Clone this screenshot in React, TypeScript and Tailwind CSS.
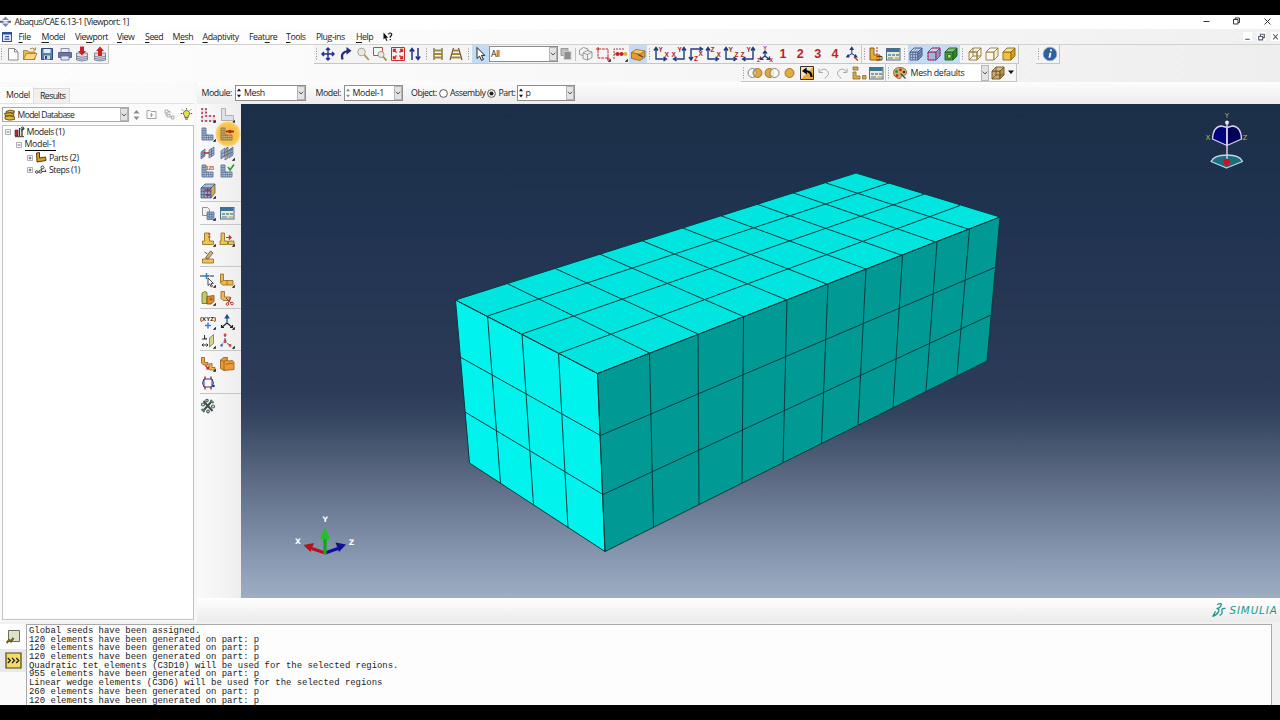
import React from "react";

type Kids = { children?: React.ReactNode };
type Pt = [number, number];

const Ic = ({ children }: Kids) => (
  <svg width="16" height="16" viewBox="0 0 16 16" fill="none" className="shrink-0">
    {children}
  </svg>
);

/* ---------- small pieces ---------- */

const Grip = () => (
  <svg width="3" height="12" viewBox="0 0 3 12" className="shrink-0">
    <path d="M1.5 .5V12" stroke="#8d8d8d" strokeWidth="1" strokeDasharray="1 1.5" />
  </svg>
);

const Cell = ({ children, on = false }: Kids & { on?: boolean }) => (
  <div className={`flex h-[18px] w-[17.4px] shrink-0 items-center justify-center ${on ? "bg-[#c3dcf3]" : ""}`}>{children}</div>
);

const Chevron = () => (
  <div className="flex h-full w-[8px] shrink-0 items-center justify-center border border-[#b5b5b5] bg-[#e3e3e3]">
    <svg width="6" height="4" viewBox="0 0 6 4" fill="none">
      <path d="M.8 .7L3 3L5.2 .7" stroke="#444" strokeWidth=".9" />
    </svg>
  </div>
);

const Spin = ({ dim = false }: { dim?: boolean }) => (
  <svg width="6" height="12" viewBox="0 0 6 12" className="shrink-0" fill={dim ? "#8a8a8a" : "#111"}>
    <path d="M3 1.6L5 4.2H1zM3 10.4L5 7.8H1z" />
  </svg>
);

/* ---------- drawing helpers ---------- */

const Arrow4 = () => (
  <path d="M8 2v12M2 8h12M6 4l2-2 2 2M6 12l2 2 2-2M4 6L2 8l2 2M12 6l2 2-2 2" stroke="#1f2f86" strokeWidth="1.4" />
);

const Cube = ({ front, top, side, line, wire = false }: { front: string; top: string; side: string; line: string; wire?: boolean }) => (
  <g stroke={line} strokeWidth=".9" strokeLinejoin="round">
    <path d="M2 6h8v8H2z" fill={front} />
    <path d="M2 6l4-4h8l-4 4z" fill={top} />
    <path d="M10 6l4-4v8l-4 4z" fill={side} />
    {wire && <path d="M6 2v8h8M6 10l-4 4" />}
  </g>
);

const MeshL = ({ line = "#4a5f86", fill = "#b9cbe4" }: { line?: string; fill?: string }) => (
  <g stroke={line} strokeWidth=".8">
    <path d="M2 2h4v7h7v5H2z" fill={fill} />
    <path d="M4 2v12M2 4.5h4M2 7h4M2 9.3h6M2 11.6h11M6.3 9v5M8.6 9v5M10.8 9v5" strokeWidth=".6" />
  </g>
);

const Corner = () => <path d="M15.8 12.8v3h-3z" fill="#111" />;

const Dialog = () => (
  <g>
    <rect x="1.5" y="2.5" width="13.5" height="11.5" fill="#efe9cf" stroke="#4d6a86" />
    <path d="M2 3h12.5v3H2z" fill="#3b7396" />
    <path d="M3 8h3v2H3zM7 8h3v2H7zM11 8h3v2h-3zM3 11.3h5v1.5H3z" fill="#7aa0b0" />
    <path d="M9.5 11.3h4.5v1.5H9.5z" fill="#c9b273" />
  </g>
);

const Axis = ({ d, a, ax, ay, b, bx, by }: { d: string; a: string; ax: number; ay: number; b: string; bx: number; by: number }) => (
  <Ic>
    <path d={d} stroke="#1e3a80" strokeWidth="1.4" />
    <text x={ax} y={ay} fill="#b0222a" fontSize="6.5" fontWeight="700" className="font-['Liberation_Sans',sans-serif]">{a}</text>
    <text x={bx} y={by} fill="#b0222a" fontSize="6.5" fontWeight="700" className="font-['Liberation_Sans',sans-serif]">{b}</text>
  </Ic>
);

const Num = ({ n }: { n: string }) => (
  <span className="font-['Liberation_Sans',sans-serif] text-[12.5px] leading-none font-bold tracking-normal text-[#c02222]">{n}</span>
);

const Triad = ({ accent = "#1e3a80" }: { accent?: string }) => (
  <path d="M8 2v7M8 9l-5.5 3.5M8 9l5.5 3.5M6.3 4L8 1.5 9.7 4zM4 10l-2 3 3.2-.2M12 10l2 3-3.2-.2" stroke={accent} strokeWidth="1.2" fill={accent} />
);

const YL = ({ t = "" }: { t?: string }) => (
  <path transform={t} d="M3 2h4v7h6v5H3z" fill="#e8ac2e" stroke="#7a5310" strokeWidth=".9" />
);

/* ---------- menu, title ---------- */

const menus: [string, string, string, string][] = [
  ["", "F", "ile", "w-[23px]"],
  ["", "M", "odel", "w-[33.5px]"],
  ["Vie", "w", "port", "w-[42px]"],
  ["", "V", "iew", "w-[28px]"],
  ["", "S", "eed", "w-[27.5px]"],
  ["M", "e", "sh", "w-[30px]"],
  ["", "A", "daptivity", "w-[46.5px]"],
  ["Feat", "u", "re", "w-[37px]"],
  ["", "T", "ools", "w-[30px]"],
  ["Plu", "g", "-ins", "w-[40px]"],
  ["", "H", "elp", "w-[27px]"],
];

const TitleBar = () => (
  <div className="flex h-[14px] shrink-0 items-center bg-white pb-px">
    <svg width="12" height="12" viewBox="0 0 12 12" className="shrink-0">
      <path d="M5.5 .5L9 4H2zM5.5 11L9 7.5H2z" fill="#7f83b8" />
      <path d="M0 4.7h3.5v2H0zM7.5 4.7H11v2H7.5z" fill="#55598f" />
      <path d="M2.5 5.8h6" stroke="#a7aad2" />
    </svg>
    <span className="ml-[2.5px] tracking-[-0.57px]">Abaqus/CAE 6.13-1 [Viewport: 1]</span>
    <svg width="80" height="12" viewBox="0 0 80 12" className="ml-auto" fill="none" stroke="#222" strokeWidth=".9">
      <path d="M3.500 5.500h6M33.500 3.500h4.500v4.500h-4.500zM35 3.500V2h4.500v4.500H38M64.500 2.500l6 6M70.500 2.500l-6 6" />
    </svg>
  </div>
);

const MenuBar = () => (
  <div className="flex h-[16px] shrink-0 items-center border-b border-[#d2d2d2] bg-[linear-gradient(90deg,#ffffff_0%,#fafafa_40%,#f0f0f0_100%)]">
    <div className="flex w-[18.5px] shrink-0 items-center pl-[2px]">
      <svg width="10" height="10" viewBox="0 0 10 10">
        <rect x=".5" y=".5" width="9" height="9" fill="#e4ecf8" stroke="#2f4f98" />
        <path d="M1 1h8v1.600H1zM3 4h4v1.200H3zM2.500 6.500h5v1.200h-5z" fill="#2f4f98" />
      </svg>
    </div>
    {menus.map(([a, u, b, w]) => (
      <div key={a + u + b} className={`${w} shrink-0 whitespace-nowrap`}>
        {a}
        <span className="underline decoration-[0.8px] underline-offset-[1.5px]">{u}</span>
        {b}
      </div>
    ))}
    <svg width="10" height="10" viewBox="0 0 10 10">
      <path d="M.5 .5v7l1.600-1.400 1.200 2.800 1.100-.5-1.200-2.600h2z" fill="#111" />
      <path d="M5.500 2.500Q5.800 1 7.200 1T8.800 2.600Q8.800 3.600 7.300 4.400v1.400M7.300 7v1.300" stroke="#111" strokeWidth="1.200" fill="none" />
    </svg>
    <div className="ml-auto flex gap-[5px]">
      {["M2 6.5h4", "M1.5 4h3.5v3H1.5zM3 4V2h3.5v3H5", "M2 2l4 4.5M6 2L2 6.5"].map((d) => (
        <div key={d} className="h-[9px] w-[9px] bg-white">
          <svg width="9" height="9" viewBox="0 0 8 8" fill="none"><path d={d} stroke="#55606f" strokeWidth="1" /></svg>
        </div>
      ))}
    </div>
  </div>
);

/* ---------- toolbars ---------- */

const Disk = ({ up }: { up: boolean }) => (
  <Ic>
    <path d="M2.500 7h11v7q-5.500 2-11 0z" fill="#d9dde8" stroke="#6a7088" strokeWidth=".8" />
    <path d="M2.500 10.300q5.500 2 11 0M2.500 12.300q5.500 2 11 0" stroke="#6a7088" strokeWidth=".8" />
    <path d={up ? "M8 .5l4 4.500h-2V10H6V5H4z" : "M6 .5h4v4.500h2L8 9.500 4 5h2z"} fill="#cf1f26" />
  </Ic>
);

const FileTools = () => (
  <div className="flex h-[19px] w-[109px] shrink-0 items-center border-r border-b border-[#c6c6c6] bg-[#f4f4f4]">
    <Grip />
    <div className="ml-[1px] flex">
      <Cell><Ic><path d="M3.500 2.500h6l3.500 3.500v8H3.500z" fill="#fff" stroke="#8b8b8b" /><path d="M9.500 2.500V6H13" stroke="#8b8b8b" /></Ic></Cell>
      <Cell><Ic><path d="M1.500 13.500v-9h4l1.500 1.500h6v7.500z" fill="#e7b64c" stroke="#a57720" strokeWidth=".8" /><path d="M1.500 13.500l3-6h10.500l-3 6z" fill="#f9d680" stroke="#a57720" strokeWidth=".8" /><path d="M8 3q3-2 5 .5M13.500 1.500v2.500h-2.500" stroke="#b58a2a" /></Ic></Cell>
      <Cell><Ic><path d="M2.500 2.500h11v11h-11z" fill="#5b7fae" stroke="#2f4a78" /><path d="M4.500 3h7v4h-7z" fill="#e6edf6" /><path d="M5 9.500h6v4H5z" fill="#cfd6de" /><path d="M6 10h2v3H6z" fill="#2f4a78" /></Ic></Cell>
      <Cell><Ic><path d="M4 2.500h8v4H4z" fill="#e8ebf2" stroke="#73799a" strokeWidth=".8" /><path d="M1.500 6.500h13v5h-13z" fill="#6c759f" stroke="#474f78" strokeWidth=".8" /><path d="M4 10h8v4H4z" fill="#dfe6f6" stroke="#5e6795" strokeWidth=".8" /></Ic></Cell>
      <Cell><Disk up={false} /></Cell>
      <Cell><Disk up /></Cell>
    </div>
  </div>
);

const ViewTools = () => (
  <div className="flex h-[19px] w-[705px] shrink-0 items-center border-r border-b border-[#c6c6c6] bg-[#f4f4f4]">
    <div className="flex w-[5.5px] justify-center"><Grip /></div>
    <Cell><Ic><Arrow4 /></Ic></Cell>
    <Cell><Ic><path d="M4.500 13.500Q2 6 10.500 5" stroke="#252a7c" strokeWidth="2.200" /><path d="M8.500 1l5 3.800-5 4z" fill="#252a7c" /></Ic></Cell>
    <Cell><Ic><circle cx="6.500" cy="6" r="3.800" fill="#e7eadf" stroke="#a9a998" /><path d="M9.300 8.800l4.500 5" stroke="#b29a55" strokeWidth="1.800" /></Ic></Cell>
    <Cell><Ic><path d="M1.500 1.500h9v8h-9z" stroke="#c24a4a" /><circle cx="9" cy="8.500" r="3" fill="#e7eadf" stroke="#999" /><path d="M11.200 10.800l3.300 3.700" stroke="#9d8340" strokeWidth="1.700" /></Ic></Cell>
    <Cell><Ic><path d="M1.500 1.500h13v13h-13z" fill="#fdeeee" stroke="#d02a2a" /><path d="M3.500 6V3.500H6M10 3.500h2.500V6M12.500 10v2.500H10M6 12.500H3.500V10M3.500 3.500l3 3M12.500 3.500l-3 3M12.500 12.500l-3-3M3.500 12.500l3-3" stroke="#d02a2a" strokeWidth="1.400" /></Ic></Cell>
    <Cell><Ic><path d="M5 14V3M2.800 5.500L5 2.500l2.200 3M11 2v11M8.800 10.500L11 13.500l2.200-3" stroke="#1f2f86" strokeWidth="1.500" /></Ic></Cell>
    <div className="flex w-[6px] justify-center"><Grip /></div>
    <Cell><Ic><path d="M4 2v12M12 2v12" stroke="#6b5a2c" strokeWidth="1.200" /><path d="M3.500 4.500h9M3.500 8h9M3.500 11.500h9" stroke="#a3893f" strokeWidth="2" /></Ic></Cell>
    <Cell><Ic><path d="M5.500 2L2 14M10.500 2L14 14" stroke="#6b5a2c" strokeWidth="1.200" /><path d="M5 4.500h6M4 8h8M3 11.500h10" stroke="#a3893f" strokeWidth="1.800" /></Ic></Cell>
    <div className="flex w-[7.2px] justify-center"><Grip /></div>
    <Cell on><Ic><path d="M5 1.500v11l2.600-2.300 1.900 4.200 1.900-.9-1.900-4.100h3.300z" fill="#fff" stroke="#222" strokeWidth="1" /></Ic></Cell>
    <div className="flex h-[16px] w-[69px] shrink-0 items-center border border-[#8d8d8d] bg-white">
      <span className="flex-1 pl-[1px]">All</span>
      <Chevron />
    </div>
    <div className="flex w-[16px] shrink-0 justify-center"><Ic><path d="M3 2.500h7v7H3z" fill="#bbb" stroke="#999" /><path d="M6 5.500h7v8H6z" fill="#8d8d8d" stroke="#ccc" /></Ic></div>
    <div className="mr-[1px] ml-[1px] h-[13px] w-px bg-[#c3c3c3]" />
    <Cell><Ic><g stroke="#8e8e8e" fill="#f2f2f2" strokeWidth=".9"><path d="M1.500 4l4-2.500 4.500 1.500v5l-4 2-4.500-1.500z" /><path d="M5 7l4-2.500 5 1.500v5.500l-4.500 2.500L5 12.500z" /><path d="M5 7l4.500 1.500L14 6M9.500 8.500V14" /></g></Ic></Cell>
    <Cell><Ic><path d="M3 3h10v9H3z" stroke="#c22d2d" strokeDasharray="3 .8" /><path d="M1 3h3M3 1v3M12 13h3M13 11v4" stroke="#c22d2d" /><Corner /></Ic></Cell>
    <Cell><Ic><path d="M2 13V3h11" stroke="#c22d2d" strokeDasharray="2 1" /><path d="M2 8h12" stroke="#8d4a2a" /><circle cx="5.500" cy="8" r="2" fill="#c22222" /><circle cx="9.500" cy="8" r="2" fill="#c22222" /><circle cx="13.500" cy="8" r="1.900" fill="#d6b13c" /><Corner /></Ic></Cell>
    <Cell on><Ic><path d="M1.500 6.500L6 3.500l9 1.500v6l-5 3.500-8.500-2z" fill="#e79a2c" stroke="#8f6216" strokeWidth=".8" /><path d="M2 6.500L6 4l8.500 1.200L10 8z" fill="#f6c568" /><path d="M1.500 6.500l8.500 1.800 5-3.300" stroke="#8f6216" strokeWidth=".8" /><path d="M8 8.500l5 2.500" stroke="#34466b" strokeWidth="1.300" /></Ic></Cell>
    <div className="flex w-[6px] justify-center"><Grip /></div>
    <Cell><Axis d="M3 2v11H12M1 4.500L3 1.500l2 3M10.500 11l3 2-3 2" a="Y" ax={5.500} ay={6} b="X" bx={11.500} by={10.500} /></Cell>
    <Cell><Axis d="M13 2v11H4M11 4.500l2-3 2 3M5.500 11l-3 2 3 2" a="Y" ax={6.500} ay={6} b="X" bx={.5} by={10.500} /></Cell>
    <Cell><Axis d="M13 3H3v10M11.500 1l3 2-3 2M1 11l2 3 2-3" a="X" ax={10.500} ay={10} b="Z" bx={6} by={15} /></Cell>
    <Cell><Axis d="M3 2v11H12M1 4.500L3 1.500l2 3M10.500 11l3 2-3 2" a="Z" ax={5.500} ay={6} b="X" bx={11.500} by={10.500} /></Cell>
    <Cell><Axis d="M3 2v11H12M1 4.500L3 1.500l2 3M10.500 11l3 2-3 2" a="Y" ax={5.500} ay={6} b="Z" bx={11.500} by={10.500} /></Cell>
    <Cell><Axis d="M13 2v11H4M11 4.500l2-3 2 3M5.500 11l-3 2 3 2" a="Y" ax={6.500} ay={6} b="Z" bx={.5} by={10.500} /></Cell>
    <Cell>
      <Ic>
        <path d="M8 5v5M8 10l-4 3M8 10l4 3M6 7.500L8 5l2 2.500M3.500 10.500v2.800h3M12.500 10.500v2.800h-3" stroke="#1e3a80" strokeWidth="1.300" />
        <g fill="#b0222a" fontSize="5.500" fontWeight="700" className="font-['Liberation_Sans',sans-serif]">
          <text x="6.200" y="4.200">Y</text>
          <text x="0" y="16">Z</text>
          <text x="12.300" y="16">X</text>
        </g>
      </Ic>
    </Cell>
    <Cell><Num n="1" /></Cell>
    <Cell><Num n="2" /></Cell>
    <Cell><Num n="3" /></Cell>
    <Cell><Num n="4" /></Cell>
    <Cell><Ic><g transform="translate(1 0) scale(.85)"><Triad /></g><path d="M10 11l4 3.500" stroke="#c22" strokeWidth="1.300" /></Ic></Cell>
    <div className="h-full w-px bg-[#c9c9c9]" />
    <div className="flex w-[5px] justify-center"><Grip /></div>
    <Cell><Ic><YL t="translate(-1 0)" /><path d="M9 1v14" stroke="#d22" strokeDasharray="2 1" /><path d="M9.500 10.500H14V14H9.500" stroke="#5b3d0c" /></Ic></Cell>
    <Cell><Ic><Dialog /></Ic></Cell>
    <div className="flex w-[6px] justify-center"><Grip /></div>
    <Cell on><Ic><Cube front="#b8cae4" top="#dbe6f4" side="#94abcf" line="#3d5486" /><path d="M4.700 6v8M7.400 6v8M2 8.700h8l4-4M2 11.400h8l4-4M4.700 6l4-4M7.400 6l4-4M12 4v8" stroke="#3d5486" strokeWidth=".7" /></Ic></Cell>
    <Cell on><Ic><Cube front="#a9b4da" top="#cdd2ea" side="#8c98c8" line="#7a3f78" /><path d="M2 6h8v8H2zM2 6l4-4h8v8l-4 4M10 6l4-4" stroke="#c42b4a" strokeDasharray="1.500 1.500" /></Ic></Cell>
    <Cell on><Ic><Cube front="#3da33d" top="#79c865" side="#2c8230" line="#1e5a22" /><path d="M4.500 8.500h3.500v3.500H4.500z" fill="#e8d24c" stroke="#1e5a22" strokeWidth=".8" /></Ic></Cell>
    <div className="flex w-[6px] justify-center"><Grip /></div>
    <Cell><Ic><Cube front="none" top="none" side="none" line="#947a32" wire /></Ic></Cell>
    <Cell><Ic><Cube front="#fdfaf0" top="#fff" side="#f6efd8" line="#947a32" /></Ic></Cell>
    <Cell><Ic><Cube front="#f2c33f" top="#fae08c" side="#d69d20" line="#8a691a" /></Ic></Cell>
  </div>
);

const DisplayTools = () => (
  <div className="flex h-[18px] w-[276px] shrink-0 items-center border-r border-b border-[#c6c6c6] bg-[#f5f5f5]">
    <div className="flex w-[5px] justify-center"><Grip /></div>
    <Cell><Ic><circle cx="5.500" cy="8" r="4.500" fill="#fff" stroke="#666" strokeWidth=".8" /><circle cx="10.500" cy="8" r="4.500" fill="#e3a83a" stroke="#8a6420" strokeWidth=".8" /><path d="M8 4.200Q11 8 8 11.800Q5 8 8 4.200" fill="#f0cf85" stroke="#777" strokeWidth=".6" /></Ic></Cell>
    <Cell><Ic><circle cx="5.500" cy="8" r="4.500" fill="#e3a83a" stroke="#8a6420" strokeWidth=".8" /><circle cx="10.500" cy="8" r="4.500" fill="#fff" fillOpacity=".75" stroke="#666" strokeWidth=".8" /></Ic></Cell>
    <Cell><Ic><circle cx="8.500" cy="8" r="4.500" fill="#e5ab3c" stroke="#8a6420" strokeWidth=".8" /></Ic></Cell>
    <Cell><Ic><path d="M1.500 1.500h13v13h-13z" fill="#f6e2b4" stroke="#333" /><path d="M2 14L14 2v12z" fill="#e9a93e" /><path d="M12.500 12Q12.500 6.500 7 6" stroke="#000" strokeWidth="2.200" /><path d="M7.500 2.500L3 6l5 3.500z" fill="#000" /></Ic></Cell>
    <Cell><Ic><path d="M3 3.500v4h4M3.500 7Q7 2 11 5.500T8.500 13.500" stroke="#aaa" strokeWidth="1" /></Ic></Cell>
    <Cell><Ic><path d="M13 3.500v4H9M12.500 7Q9 2 5 5.500T7.500 13.500" stroke="#aaa" strokeWidth="1" /></Ic></Cell>
    <Cell><Ic><g fill="#dcaa4a" stroke="#8a6a26" strokeWidth=".8"><path d="M2 2h5v3H2zM2 7h3v4h4v3H2zM11.500 10.500H15V14h-3.500z" /></g></Ic></Cell>
    <Cell><Ic><Dialog /></Ic></Cell>
    <div className="h-full w-px bg-[#c9c9c9]" />
    <div className="flex w-[5px] justify-center"><Grip /></div>
    <Cell><Ic><path d="M8 2.500c4.500 0 7 2.500 6.500 5.500s-3 2-4.500 2.500 0 3.500-3 3S1.500 11 1.500 7.500 4.500 2.500 8 2.500z" fill="#dcae6a" stroke="#7b5a2b" strokeWidth=".8" /><circle cx="4.500" cy="6.500" r="1.500" fill="#2b8b35" /><circle cx="8.500" cy="4.800" r="1.400" fill="#c22" /><circle cx="12" cy="7" r="1.300" fill="#333" /><circle cx="5" cy="10.500" r="1.400" fill="#b43322" /><path d="M8.500 8.500l5 5" stroke="#254" strokeWidth="1.300" /></Ic></Cell>
    <div className="flex h-[16px] w-[80px] shrink-0 items-center bg-white">
      <span className="flex-1 pl-[2px] tracking-[-0.3px]">Mesh defaults</span>
      <Chevron />
    </div>
    <div className="flex w-[19px] shrink-0 justify-center"><Ic><Cube front="#cdaa70" top="#dcc18c" side="#b59158" line="#6d5122" wire /></Ic></div>
    <svg width="7" height="5" viewBox="0 0 7 5"><path d="M0 .5h6L3 4z" fill="#111" /></svg>
  </div>
);

const Toolbars = () => (
  <div className="flex h-[37px] shrink-0 flex-col bg-[linear-gradient(90deg,#fdfdfd_0%,#f8f8f8_45%,#eeeeee_100%)]">
    <div className="flex h-[19px]">
      <FileTools />
      <div className="w-[205px]" />
      <ViewTools />
      <div className="w-[17px]" />
      <div className="flex h-[19px] w-[24px] items-center border-r border-b border-[#c6c6c6] bg-[#f4f4f4]">
        <div className="flex w-[5px] justify-center"><Grip /></div>
        <Cell>
          <Ic>
            <circle cx="8" cy="8" r="6.800" fill="#2f5f9e" stroke="#8fa9c9" strokeWidth=".8" />
            <path d="M9.200 3.400l-.4 1.800M8.500 6.700l-1.100 5" stroke="#fff" strokeWidth="1.800" />
          </Ic>
        </Cell>
      </div>
    </div>
    <div className="flex h-[18px] pl-[741px]">
      <DisplayTools />
    </div>
  </div>
);

/* ---------- model tree ---------- */

const Box = ({ plus }: { plus: boolean }) => (
  <svg width="6" height="6" viewBox="0 0 6 6" className="shrink-0" fill="none">
    <path d="M.5 .5h5v5h-5z" fill="#fff" stroke="#8f8f8f" strokeWidth=".7" />
    <path d={plus ? "M1.5 3h3M3 1.5v3" : "M1.5 3h3"} stroke="#344a80" strokeWidth=".8" />
  </svg>
);

const TreePanel = () => (
  <div className="flex w-[194px] shrink-0 flex-col bg-[#fafafa]">
    <div className="flex h-[21px] items-end">
      <div className="flex h-[16.5px] w-[34px] items-center border-r border-[#dcdcdc] bg-white pl-[6px] tracking-[-0.4px]">Model</div>
      <div className="flex h-[15px] w-[36px] items-center border-t border-r border-[#dcdcdc] bg-[#f0f0f0] pl-[6px] tracking-[-0.6px]">Results</div>
    </div>
    <div className="flex h-[22px] items-center border-t border-[#e2e2e2] bg-[#fbfbfb] pl-[2px]">
      <div className="flex h-[15px] w-[127px] items-center border border-[#a8a8a8] bg-white">
        <svg width="13" height="12" viewBox="0 0 13 12" className="shrink-0" stroke="#4b3b0c" strokeWidth=".8" fill="#dcb63a">
          <path d="M3 2.500Q7 0 11.500 2L11 4Q6 3 3 4.500z" />
          <path d="M1.500 4.500Q6 3 11 4.800L10.500 7Q6 5.500 2.500 7z" />
          <path d="M2 7.500Q6 6 11.500 7.800L11.500 10.500Q6 12 2 10z" />
        </svg>
        <span className="flex-1 pl-[1.5px] text-[8.6px] whitespace-nowrap tracking-[-0.6px]">Model Database</span>
        <Chevron />
      </div>
      <svg width="9" height="12" viewBox="0 0 9 12" className="ml-[3px]" fill="#8c8c8c"><path d="M4.500 1L7.500 4.500h-6zM4.500 11L7.500 7.500h-6z" /></svg>
      <svg width="11" height="11" viewBox="0 0 11 11" className="ml-[5px]" fill="none" stroke="#9b9b9b" strokeWidth=".9"><path d="M1 9.500v-8h3l1 1h5v7zM4 6h3M5.500 4v4" /></svg>
      <svg width="11" height="11" viewBox="0 0 11 11" className="ml-[7px]" fill="none" stroke="#a5a5a5" strokeWidth=".9"><path d="M1 1h3v3H1zM3 5.500h3v2.500H3zM7.500 7h2.500v3H7.500zM4 2.500h2v2M2 4v3M6 8h1.500" /></svg>
      <svg width="13" height="13" viewBox="0 0 13 13" className="ml-[5px]" fill="none">
        <path d="M6.500 2.500a3 3 0 0 1 1.700 5.500v1.500H4.800V8a3 3 0 0 1 1.700-5.500z" fill="#e6df52" stroke="#55521d" strokeWidth=".8" />
        <path d="M5 11h3M6.500 .3v1.200M.8 5.500h1.500M10.700 5.500h1.500M2 1.500l1 1M11 1.500l-1 1" stroke="#333" strokeWidth=".9" />
      </svg>
    </div>
    <div className="ml-[1.5px] flex flex-1 flex-col border border-[#c3c3c3] bg-white">
      <div className="flex h-[12.7px] items-center pl-[2px]">
        <Box plus={false} />
        <svg width="11" height="12" viewBox="0 0 11 12" className="ml-[3px] shrink-0" fill="none">
          <path d="M1 4h3v6H1z" fill="#b32e2e" stroke="#522" strokeWidth=".6" /><path d="M5.500 2v8M8 4l1.500-2M8 4v6" stroke="#333" strokeWidth="1.300" /><circle cx="8.500" cy="2.500" r="1.500" stroke="#333" /><path d="M1 10.700h9" stroke="#333" />
        </svg>
        <span className="ml-[2px]">Models (1)</span>
      </div>
      <div className="flex h-[12.7px] items-center pl-[13px]">
        <Box plus={false} />
        <span className="ml-[3px] border-b border-black leading-[10.5px] tracking-[-0.3px]">Model-1</span>
      </div>
      <div className="flex h-[12.7px] items-center pl-[24.5px]">
        <Box plus />
        <svg width="12" height="11" viewBox="0 0 12 11" className="ml-[2px] shrink-0"><path d="M1.500 1l3-.5V6l6-1 .5 3.500L2 10z" fill="#dba02a" stroke="#3f2d0a" strokeWidth=".9" /></svg>
        <span className="ml-[2px]">Parts (2)</span>
      </div>
      <div className="flex h-[12.7px] items-center pl-[24.5px]">
        <Box plus />
        <svg width="12" height="11" viewBox="0 0 12 11" className="ml-[2px] shrink-0" fill="none" stroke="#333" strokeWidth=".9"><circle cx="1.800" cy="7" r="1.300" /><circle cx="5.500" cy="6.500" r="1.500" fill="#bde0bd" /><circle cx="7.500" cy="2.500" r="1.500" /><path d="M3 7h1M6 5l1-1.500M7 6.500h4M10 4.500l.8 2" /></svg>
        <span className="ml-[2px]">Steps (1)</span>
      </div>
    </div>
  </div>
);

/* ---------- toolbox ---------- */

const Row = ({ children, h }: Kids & { h: string }) => (
  <div className={`flex ${h} shrink-0 items-center gap-[3px]`}>{children}</div>
);
const Rule = () => <div className="h-px w-[41px] shrink-0 bg-[#c6c6c6]" />;

const Toolbox = () => (
  <div className="flex w-[44px] shrink-0 flex-col bg-[linear-gradient(90deg,#fafafa,#eeeeee)] pt-[1px] pl-[3px]">
    <Row h="h-[19px]">
      <Ic><path d="M2 2h4v7h8v5H2z" fill="#e6ecf6" stroke="#8a98b4" strokeWidth=".7" strokeDasharray="1.500 1" /><path d="M2 2h.1M6 2h.1M2 6h.1M2 10h.1M2 14h.1M6 14h.1M10 14h.1M14 14h.1M14 9h.1M6 9h.1M10 9h.1M6 5.500h.1" stroke="#c22d3a" strokeWidth="1.900" strokeLinecap="round" /><Corner /></Ic>
      <Ic><path d="M2.500 1.500h4v7h8v5h-12z" fill="#dde2ea" stroke="#9aa3b3" strokeWidth=".8" /><path d="M2.500 13.500h12" stroke="#d8a36e" strokeDasharray="1.500 1.500" /><Corner /></Ic>
    </Row>
    <Row h="h-[19px]">
      <Ic><MeshL /><Corner /></Ic>
      <div className="relative h-[16px] w-[16px]">
        <div className="absolute top-[-5px] left-[-4px] h-[26px] w-[26px] rounded-full bg-[radial-gradient(circle,#f3b93c_0%,#f6c451_55%,#f9d98c_66%,transparent_72%)]" />
        <div className="relative"><Ic><MeshL line="#80692f" fill="#d9bd74" /><path d="M7 5.500h8" stroke="#b32020" strokeWidth="1.800" /><path d="M8.500 5.500l2.500-2 2.500 2-2.500 2z" fill="#b32020" /></Ic></div>
      </div>
    </Row>
    <Row h="h-[19px]">
      <Ic><g stroke="#4a5f86" strokeWidth=".7" fill="#9fb5d6"><path d="M1 7l4-3v7l-4 3zM9 5l5-3v8l-5 3z" /><path d="M1 9.500l4-3M1 12l4-3M9 8l5-3M9 10.500l5-3M3 5.500v7M11.500 3.500v8" /></g><path d="M4 8h5" stroke="#c22" strokeWidth="1.500" /></Ic>
      <Ic><g stroke="#4a5f86" strokeWidth=".7"><path d="M2 6l4-3v8l-4 3z" fill="#9fb5d6" /><path d="M6 5l3-3v11l-3 2z" fill="#d7b869" /><path d="M10 5l4-3v8l-4 3z" fill="#9fb5d6" /><path d="M2 9l12-5M2 12l12-5M8 2v10M12 3v8" /></g><Corner /></Ic>
    </Row>
    <Row h="h-[18px]">
      <Ic><MeshL /><text x="5.800" y="6.500" fontSize="5.500" fontWeight="700" fill="#c05040" className="font-['Liberation_Sans',sans-serif]">123</text></Ic>
      <Ic><MeshL /><path d="M9 4l2 3 4-5.500" stroke="#2c9a36" strokeWidth="1.600" /></Ic>
    </Row>
    <Row h="h-[21px]">
      <Ic><path d="M1 5l4-4h10l-4 4z" fill="#a9bbdf" stroke="#39476e" strokeWidth=".7" /><path d="M1 5h10v10H1z" fill="#8ea3d0" stroke="#39476e" strokeWidth=".7" /><path d="M11 5l4-4v9l-4 5z" fill="#e0ae44" stroke="#39476e" strokeWidth=".7" /><path d="M4 5v10M7.500 5v10M1 8.300h10M1 11.600h10" stroke="#39476e" strokeWidth=".6" /><path d="M5 7h5M6 12h4" stroke="#b5222a" strokeWidth="1.400" /><Corner /></Ic>
    </Row>
    <Rule />
    <Row h="h-[22px]">
      <Ic><path d="M2.500 2.500h5l2 2v6h-7z" fill="#f2f2f2" stroke="#777" strokeWidth=".8" /><path d="M7 7h7v7.500H7z" fill="#9fb5d6" stroke="#4a5f86" strokeWidth=".7" /><path d="M9.300 7v7.500M11.700 7v7.500M7 9.500h7M7 12h7" stroke="#4a5f86" strokeWidth=".6" /><Corner /></Ic>
      <Ic><Dialog /></Ic>
    </Row>
    <Rule />
    <div className="h-[4px] shrink-0" />
    <Row h="h-[19px]">
      <Ic><path d="M4.500 2h5v8h4v3.500h-11V10h2z" fill="#eec457" stroke="#8a691a" strokeWidth=".8" /><path d="M8 3h3M8 6h3" stroke="#b33" strokeDasharray="1.500 1" /><Corner /></Ic>
      <Ic><path d="M2 2h3.500v8h3v3.500H1V10h1zM9.500 10H15v3.500H9.500z" fill="#eec457" stroke="#8a691a" strokeWidth=".8" /><path d="M7 6.500h4.500M9.800 4.500l2.200 2-2.200 2" stroke="#c22" strokeWidth="1.200" /><Corner /></Ic>
    </Row>
    <Row h="h-[18px]">
      <Ic><path d="M2.500 10h11v4h-11z" fill="#eec457" stroke="#8a691a" strokeWidth=".8" /><path d="M5.500 9l5-7 2.500 2-5 6z" fill="#d9b27a" stroke="#5e4a2a" strokeWidth=".8" /><path d="M4.500 3l3 2" stroke="#a33" /></Ic>
    </Row>
    <Rule />
    <div className="h-[4px] shrink-0" />
    <Row h="h-[18px]">
      <Ic><path d="M0 4h15" stroke="#333" strokeWidth="1" strokeDasharray="4 1" /><path d="M6.500 1v6M3.500 4h6" stroke="#3b7fc4" strokeWidth="1.500" /><path d="M8 6v7.500l1.800-1.600 1.300 3 1.300-.6-1.300-2.900h2.300z" fill="#fff" stroke="#222" strokeWidth=".8" /><Corner /></Ic>
      <Ic><path d="M1.500 2h3v6.500H14V13H3.500l-2-2z" fill="#f0b94e" stroke="#8a691a" strokeWidth=".8" /><path d="M1.500 10L4.500 8.500M8 8.500V13" stroke="#8a691a" strokeWidth=".8" /><Corner /></Ic>
    </Row>
    <Row h="h-[18px]">
      <Ic><path d="M2 3l3-1.500 2 1v11H2z" fill="#c8c96a" stroke="#6a6a24" strokeWidth=".8" /><path d="M7 6.500l7-1v6l-3 2.500H7z" fill="#e58f2c" stroke="#7a4a12" strokeWidth=".8" /><circle cx="11" cy="9" r="1.500" fill="#b35c1c" /><Corner /></Ic>
      <Ic><path d="M2 1.500h3.500V7H11v3.500H4L2 8.500z" fill="#f0b94e" stroke="#8a691a" strokeWidth=".8" /><path d="M7 8l5 5M12 7l-3 6" stroke="#9a3a3a" strokeWidth="1" /><circle cx="8.500" cy="14" r="1.300" stroke="#b33" /><circle cx="13" cy="13.500" r="1.300" stroke="#b33" /></Ic>
    </Row>
    <div className="h-[1px] shrink-0" />
    <Rule />
    <div className="h-[4px] shrink-0" />
    <Row h="h-[18px]">
      <Ic><text x="0" y="7" fontSize="6" fontWeight="700" fill="#222" className="font-['Liberation_Sans',sans-serif] tracking-[0.1px]">(XYZ)</text><path d="M8 8.500v6M5 11.500h6" stroke="#3b7fc4" strokeWidth="1.400" /><Corner /></Ic>
      <Ic><g stroke="#222" strokeWidth="1.100"><path d="M8 9l-5.500 4.500M8 9l5.500 4.500M2.500 11v2.500H5M11 13.500h2.500V11" /></g><path d="M8 1v8M6.200 4L8 1l1.800 3z" stroke="#1d4f8f" strokeWidth="1.200" fill="#1d4f8f" /><Corner /></Ic>
    </Row>
    <Row h="h-[19px]">
      <Ic><path d="M2 6h5M4.500 6V2M7 6l-1.500-1M2 12h6M3.500 10.500L2 12l1.500 1.500M6.500 10.500L8 12l-1.500 1.500" stroke="#333" strokeWidth="1" /><path d="M9.500 5l4-3.500v9l-4 3.500z" fill="#cfd58c" stroke="#777d36" strokeWidth=".8" /><Corner /></Ic>
      <Ic><path d="M6 2v6M6 8.500l-4 4M6 8.500l5 4" stroke="#58688f" strokeWidth="1.200" strokeDasharray="2 1" /><path d="M6 2h.1M6 8h.1M11 12.500h.1" stroke="#d6423c" strokeWidth="2.800" strokeLinecap="round" /><path d="M2.500 12.500h.1" stroke="#3b6fc4" strokeWidth="2.400" strokeLinecap="round" /><Corner /></Ic>
    </Row>
    <Rule />
    <div className="h-[4px] shrink-0" />
    <Row h="h-[18px]">
      <Ic><path d="M1.500 1.500h3v5h3.500V9H3.500l-2-2z" fill="#f0a53e" stroke="#8a5a1a" strokeWidth=".8" /><path d="M9 8l3-.5v4h3V14h-5l-1-1.500z" fill="#f0b94e" stroke="#8a5a1a" strokeWidth=".8" /><path d="M5.500 9.500l3 3.500M8.500 10.500V13H6" stroke="#c22" strokeWidth="1.200" /><Corner /></Ic>
      <Ic><path d="M1.500 4l3-2.500h4L8 4l2 1 3.500-.5 1.500 2v7L5 14.500l-3.500-2z" fill="#ee9a34" stroke="#8a5a1a" strokeWidth=".8" /><path d="M1.500 4l3.500 1.500V14.500M5 5.500L8 4M7 8l7-.5" stroke="#8a5a1a" strokeWidth=".8" /></Ic>
    </Row>
    <Row h="h-[20px]">
      <Ic><path d="M4 4h8v8H4zM4 4Q1 8 4 12M12 4q3 4 0 8" stroke="#2d3f8c" strokeWidth="1" /><path d="M5 1.500v3M11 1.500v3M5 11.500v3M11 11.500v3" stroke="#b8343c" strokeWidth="1.500" /><path d="M13.500 11h.1" stroke="#2d3f8c" strokeWidth="2.400" strokeLinecap="round" /></Ic>
    </Row>
    <Rule />
    <div className="h-[3px] shrink-0" />
    <Row h="h-[18px]">
      <Ic><path d="M3 13L12 3M3.500 3l9 10" stroke="#3d4f48" strokeWidth="2" /><path d="M10.500 2l3 3M1.500 11l3 3" stroke="#3d8a55" strokeWidth="2" /><g stroke="#4f5f59" strokeWidth="1.200"><circle cx="3" cy="6.500" r="1.500" /><circle cx="13" cy="8.500" r="1.500" /><circle cx="8" cy="13.500" r="1.300" /><circle cx="7" cy="2.500" r="1.200" /></g></Ic>
    </Row>
  </div>
);

/* ---------- viewport ---------- */

const leftTop: Pt[] = [[455.5, 300], [487.5, 316], [522, 334], [558.5, 353.5], [597.5, 373.5]];
const leftBottom: Pt[] = [[469.5, 463], [500.5, 483], [533.5, 505], [568, 528], [605, 551.5]];
const leftEdge: Pt[] = [[455.5, 300], [460, 357], [465, 412], [469.5, 463]];
const midEdge: Pt[] = [[597.5, 373.5], [600.5, 435.5], [603, 494.5], [605, 551.5]];
const rightEdge: Pt[] = [[1000, 217], [996, 267], [991, 315], [987, 361]];
const rightTop: Pt[] = [[597.5, 373.5], [649.5, 353], [698, 334], [743.5, 316.5], [787, 300], [828, 284.5], [866, 269], [902.5, 255.5], [937, 242.5], [969.5, 229.5], [1000, 217]];
const rightBottom: Pt[] = [[605, 551.5], [653.5, 528], [699, 505], [742, 483], [783, 463], [821.5, 443], [858, 425], [893, 408], [926, 391], [957, 375], [987, 361]];
const backTop: Pt[] = [[455.5, 300], [506.7, 283.3], [553.5, 267.7], [599, 253.7], [641, 240.3], [682, 227.7], [720.7, 215.7], [756.7, 204], [792.7, 192.7], [826, 183], [856, 173]];
const farTop: Pt[] = [[856, 173], [889, 183], [924.5, 194], [960, 205.5], [1000, 217]];

const join = (a: Pt[], b: Pt[]) => a.map((p, i) => `M${p[0]} ${p[1]}L${b[i][0]} ${b[i][1]}`).join("");

const Scene = () => (
  <svg width="1039" height="494" viewBox="241 104 1039 494" className="block" fill="none">
    <path d="M455.500 300L856 173L1000 217L597.500 373.500z" fill="#00e5df" />
    <path d="M455.500 300L597.500 373.500L605 551.500L469.500 463z" fill="#00f4ed" />
    <path d="M597.500 373.500L1000 217L987 361L605 551.500z" fill="#009993" />
    <path
      d={join(leftTop, leftBottom) + join(leftEdge, midEdge) + join(midEdge, rightEdge) + join(rightTop, rightBottom) + join(backTop, rightTop) + join(leftTop, farTop)}
      stroke="#003c3e"
      strokeWidth="1"
    />

    <g>
      <path d="M325 553l-13-4.500" stroke="#b3141c" strokeWidth="3" />
      <path d="M303.500 545l10.500-2-3.500 9z" fill="#b3141c" />
      <path d="M325 553l13-4.500" stroke="#10109c" strokeWidth="3" />
      <path d="M346 544.500l-10.500-2 3.500 9.500z" fill="#10109c" />
      <path d="M325 554v-17" stroke="#18a51c" strokeWidth="3.400" />
      <path d="M325 527.500l4.800 11.500h-9.600z" fill="#1cc420" />
      <g fill="#fff" fontSize="7.500" fontWeight="700" textAnchor="middle" className="font-['DejaVu_Sans',sans-serif] tracking-normal">
        <text x="325.300" y="522">Y</text>
        <text x="298" y="544">X</text>
        <text x="351.500" y="544.500">Z</text>
      </g>
    </g>

    <g strokeLinejoin="round">
      <path d="M1211 161.500Q1214 155 1227 155T1242.500 161.500L1226.500 168z" fill="#1d6e7c" stroke="#c3d3ea" strokeWidth="1.300" />
      <path d="M1212.500 139Q1213 126.500 1221.500 126L1227 127.500V145.500z" fill="#00007c" stroke="#d7cff0" strokeWidth="1.300" />
      <path d="M1241.500 139Q1241 126.500 1232.500 126L1227 127.500V145.500z" fill="#000054" stroke="#d7cff0" strokeWidth="1.300" />
      <path d="M1227 122v40" stroke="#e0c8ee" strokeWidth="1.500" />
      <circle cx="1227" cy="122.500" r="2" fill="#e9e2f8" />
      <circle cx="1226.700" cy="162" r="3.200" fill="#d3101a" />
      <g fill="#b9b93c" fontSize="7" textAnchor="middle" className="font-['DejaVu_Sans',sans-serif] tracking-normal">
        <text x="1227" y="118">Y</text>
        <text x="1208" y="140">X</text>
        <text x="1245" y="140">Z</text>
      </g>
    </g>
  </svg>
);

const Radio = ({ on = false }: { on?: boolean }) => (
  <svg width="9" height="9" viewBox="0 0 9 9" className="shrink-0">
    <circle cx="4.500" cy="4.500" r="3.900" fill="#fff" stroke="#444" strokeWidth=".9" />
    {on && <circle cx="4.500" cy="4.500" r="2.100" fill="#222" />}
  </svg>
);

const ContextBar = () => (
  <div className="flex h-[22px] shrink-0 items-center bg-[linear-gradient(180deg,#fdfdfd,#ececec)] pl-[4.5px] whitespace-nowrap">
    <span className="w-[33.5px] shrink-0">Module:</span>
    <div className="flex h-[16px] w-[71px] shrink-0 items-center border border-[#8d8d8d] bg-white">
      <Spin />
      <span className="flex-1 pl-[2px]">Mesh</span>
      <Chevron />
    </div>
    <span className="ml-[9.5px] w-[28px] shrink-0">Model:</span>
    <div className="flex h-[16px] w-[59px] shrink-0 items-center border border-[#8d8d8d] bg-white">
      <Spin dim />
      <span className="flex-1 pl-[2px] tracking-[-0.3px]">Model-1</span>
      <Chevron />
    </div>
    <span className="ml-[8.5px] w-[28px] shrink-0">Object:</span>
    <Radio />
    <span className="ml-[2px] w-[37px] shrink-0">Assembly</span>
    <Radio on />
    <span className="ml-[2.5px] w-[18px] shrink-0">Part:</span>
    <div className="flex h-[16px] w-[58px] shrink-0 items-center border border-[#8d8d8d] bg-white">
      <Spin />
      <span className="flex-1 pl-[2px]">p</span>
      <Chevron />
    </div>
  </div>
);

/* ---------- messages ---------- */

const messages = [
  "Global seeds have been assigned.",
  "120 elements have been generated on part: p",
  "120 elements have been generated on part: p",
  "120 elements have been generated on part: p",
  "Quadratic tet elements (C3D10) will be used for the selected regions.",
  "955 elements have been generated on part: p",
  "Linear wedge elements (C3D6) will be used for the selected regions",
  "260 elements have been generated on part: p",
  "120 elements have been generated on part: p",
];

const MessageArea = () => (
  <div className="flex h-[83px] shrink-0 overflow-hidden bg-[#f1f1f1] pt-[2px]">
    <div className="flex w-[26px] shrink-0 flex-col items-center">
      <div className="flex h-[25px] w-full items-center justify-center bg-white">
        <svg width="15" height="16" viewBox="0 0 15 16"><path d="M2.500 1.500h11v11h-11z" fill="#dfe3c8" stroke="#6a6d58" /><path d="M.5 14l2.500-3 2 1.500 2.500-3.500" stroke="#6e6428" strokeWidth="2.200" fill="none" /></svg>
      </div>
      <div className="flex h-[23px] w-full items-center justify-center bg-[#e9e9e9]">
        <svg width="17" height="17" viewBox="0 0 17 17" fill="none"><path d="M1 1h15v15H1z" fill="#f3dc62" stroke="#4c4318" strokeWidth="1.200" /><path d="M2.800 6l2.500 2.500L2.800 11M7 6l2.500 2.500L7 11M11.200 6l2.500 2.500-2.500 2.500" stroke="#222" strokeWidth="1.300" /></svg>
      </div>
      <div className="w-full flex-1 bg-[#fafafa]" />
    </div>
    <div className="w-[1246px] shrink-0 border-t border-r border-l border-[#a9a9a9] bg-[#fdfdfd] pt-[2px] pl-[2px] font-['Liberation_Mono',monospace] text-[8.93px] leading-[8.7px] tracking-normal text-[#1c1c1c]">
      {messages.map((m, i) => (
        <div key={i} className="h-[8.7px] whitespace-pre">{m}</div>
      ))}
    </div>
  </div>
);

export default function App() {
  return (
    <div className="flex h-[720px] w-[1280px] flex-col overflow-hidden bg-black pt-[15px] font-['Open_Sans','Noto_Sans',sans-serif] text-[8.8px] leading-[12px] tracking-[-0.45px] text-[#1b1b1b]">
      <TitleBar />
      <MenuBar />
      <Toolbars />
      <div className="flex h-[540px] shrink-0 bg-[#f7f7f7]">
        <div className="flex h-[538px] shrink-0"><TreePanel /></div>
        <div className="ml-[3px] flex flex-1 flex-col">
          <ContextBar />
          <div className="flex h-[494px] shrink-0">
            <Toolbox />
            <div className="h-[494px] w-[1039px] shrink-0 bg-[linear-gradient(180deg,#1b2f48_0%,#203350_25%,#2c3c58_58%,#33445f_63%,#596880_75%,#8293ab_90%,#9eaec4_100%)]">
              <Scene />
            </div>
          </div>
          <div className="flex h-[24px] items-center justify-end bg-gradient-to-b from-white to-[#ebebeb]">
            <div className="flex w-[69px] shrink-0 items-center gap-[2.5px] text-[#1a9a8d]">
              <svg width="16" height="16" viewBox="0 0 16 16" fill="none" className="shrink-0" stroke="#1a9a8d" strokeWidth="1.300">
                <path d="M6 2.500Q11.500 .2 10 3.500T5.500 6.500Q9.500 7 7 10.500T2 14L4.500 9.200M14.500 6.500Q10 6 11 9T8.500 13.500" />
              </svg>
              <span className="font-['DejaVu_Sans',sans-serif] text-[10.3px] leading-none font-normal tracking-[0.9px] italic">SIMULIA</span>
            </div>
          </div>
        </div>
      </div>
      <MessageArea />
    </div>
  );
}
